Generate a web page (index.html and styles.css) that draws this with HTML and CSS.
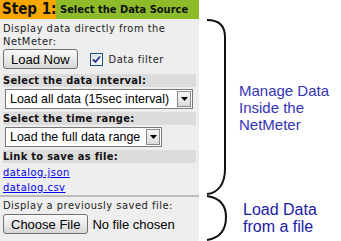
FILE: index.html
```html
<!DOCTYPE html>
<html lang="en">
<head>
    <meta charset="UTF-8">
    <title>Step 1: Select the Data Source</title>
    <link rel="stylesheet" href="styles.css">
</head>
<body>
    <div class="page">
        <div class="panel">
            <div class="step-head">
                <span class="step-num">Step 1:</span>
                <span class="step-title">Select the Data Source</span>
            </div>

            <p class="intro">Display data directly from the NetMeter:</p>
            <div class="load-row">
                <button class="btn">Load Now</button>
                <span class="check">
                    <svg width="9" height="9" viewBox="0 0 9 9"><path d="M1 4.5 L3.5 7 L8 1.5" fill="none" stroke="#21348c" stroke-width="1.8"/></svg>
                </span>
                <span class="check-label">Data filter</span>
            </div>

            <div class="bar">Select the data interval:</div>
            <div class="select wide">
                <span class="select-text">Load all data (15sec interval)</span>
                <span class="drop"><svg width="7" height="4" viewBox="0 0 7 4"><path d="M0 0 H7 L3.5 4 Z" fill="#000"/></svg></span>
            </div>

            <div class="bar">Select the time range:</div>
            <div class="select">
                <span class="select-text">Load the full data range</span>
                <span class="drop"><svg width="7" height="4" viewBox="0 0 7 4"><path d="M0 0 H7 L3.5 4 Z" fill="#000"/></svg></span>
            </div>

            <div class="bar">Link to save as file:</div>
            <div class="links">
                <a class="file-link" href="#">datalog.json</a>
                <a class="file-link" href="#">datalog.csv</a>
            </div>

            <div class="saved">
                <p class="intro">Display a previously saved file:</p>
                <div class="load-row">
                    <button class="btn">Choose File</button>
                    <span class="no-file">No file chosen</span>
                </div>
            </div>
        </div>

        <div class="notes">
            <div class="note big">
                <svg class="brace" width="30" height="176" viewBox="0 0 30 176">
                    <path d="M3 1 C14 1 21 6 21 18 L21 150 C21 165 14 174 3 175" fill="none" stroke="#111" stroke-width="2"/>
                </svg>
                <span class="note-text">Manage Data Inside the NetMeter</span>
            </div>
            <div class="note small">
                <svg class="brace" width="30" height="46" viewBox="0 0 30 46">
                    <path d="M3 1 C16 3 22 10 22 22 C22 35 16 43 3 45" fill="none" stroke="#111" stroke-width="2"/>
                </svg>
                <span class="note-text dark">Load Data from a file</span>
            </div>
        </div>
    </div>
</body>
</html>
```

FILE: styles.css
```css
body {
    margin: 0;
    padding: 0;
    background-color: #fff;
    font-family: "DejaVu Sans Condensed", "DejaVu Sans", sans-serif;
    font-size: 11px;
    letter-spacing: 0.5px;
    color: #222;
}
.page {
    display: flex;
    width: 341px;
    height: 241px;
    overflow: hidden;
}
.panel {
    width: 199px;
    height: 241px;
    background-color: #eeeeee;
    flex-shrink: 0;
}
.step-head {
    display: flex;
    height: 19px;
    background-color: #8dbb2a;
    white-space: nowrap;
    letter-spacing: 0;
}
.step-num {
    width: 56px;
    background-color: #f7a600;
    font-weight: bold;
    font-size: 15px;
    line-height: 19px;
    padding-left: 2px;
    box-sizing: border-box;
    color: #111;
    overflow: hidden;
}
.step-title {
    font-weight: bold;
    font-size: 11px;
    line-height: 20px;
    padding-left: 4px;
    color: #111;
}
.intro {
    margin: 3px 3px 0;
    line-height: 13px;
}
.load-row {
    display: flex;
    align-items: center;
    margin: 1px 3px 0;
}
.btn {
    height: 20px;
    padding: 0 7px;
    font-family: "Liberation Sans", Arial, sans-serif;
    font-size: 13px;
    letter-spacing: 0;
    color: #000;
    border: 1px solid #707070;
    border-radius: 3px;
    background: linear-gradient(#fafafa, #e6e6e6 60%, #d6d6d6);
}
.check {
    display: flex;
    align-items: center;
    justify-content: center;
    width: 11px;
    height: 11px;
    margin-left: 12px;
    border: 1px solid #1c5180;
    background: linear-gradient(135deg, #dcdcd7, #fff);
}
.check-label {
    margin-left: 6px;
}
.bar {
    margin: 3px 3px 0;
    height: 13px;
    line-height: 13px;
    background-color: #dcdcdc;
    font-weight: bold;
    letter-spacing: 0.3px;
    color: #111;
}
.load-row + .bar {
    margin-top: 5px;
}
.select {
    display: flex;
    align-items: center;
    width: 157px;
    height: 20px;
    margin: 2px 0 0 5px;
    border: 1px solid #7a7a7a;
    background-color: #fff;
    box-sizing: border-box;
}
.select.wide {
    width: 188px;
}
.select-text {
    flex: 1;
    min-width: 0;
    overflow: hidden;
    padding-left: 4px;
    font-family: "Liberation Sans", Arial, sans-serif;
    font-size: 12.4px;
    letter-spacing: 0;
    color: #000;
    white-space: nowrap;
}
.drop {
    display: flex;
    align-items: center;
    justify-content: center;
    flex-shrink: 0;
    width: 14px;
    height: 16px;
    margin-right: 1px;
    border: 1px solid #8a8a8a;
    background: linear-gradient(#f6f6f6, #dcdcdc);
    box-sizing: border-box;
}
.links {
    padding-top: 2px;
}
.file-link {
    display: block;
    margin: 0 3px;
    line-height: 15px;
    color: #0000ee;
}
.saved {
    border-top: 2px solid #bdbdbd;
}
.saved .intro {
    margin-top: 2px;
}
.saved .load-row {
    margin-top: 2px;
}
.no-file {
    margin-left: 4px;
    font-family: "Liberation Sans", Arial, sans-serif;
    font-size: 13px;
    letter-spacing: 0;
    color: #000;
}
.notes {
    padding-top: 19px;
    padding-left: 5px;
}
.note {
    display: flex;
    align-items: center;
}
.note.big {
    height: 176px;
}
.note.small {
    height: 46px;
}
.brace {
    flex-shrink: 0;
}
.note-text {
    width: 100px;
    margin-left: 5px;
    font-family: "Liberation Sans", Arial, sans-serif;
    font-size: 15px;
    line-height: 17px;
    letter-spacing: 0;
    color: #3434b8;
}
.note-text.dark {
    margin-left: 9px;
    font-size: 16px;
    color: #1a1aa6;
}
```
